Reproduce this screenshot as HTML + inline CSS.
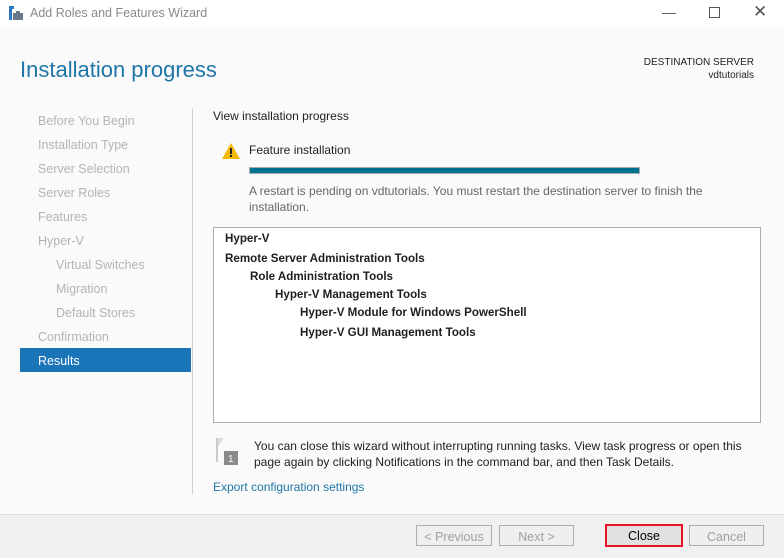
<!DOCTYPE html>
<html><head><style>
body{margin:0;width:784px;height:557px;overflow:hidden;font-family:"Segoe UI","Liberation Sans",sans-serif;font-size:12px;color:#1e1e1e;background:#fafafa;position:relative}
.a{position:absolute;white-space:nowrap}
.nav{color:#b4b4b4;font-size:12.5px}
.btn{position:absolute;top:525px;height:21px;border:1px solid #adadad;background:#efefef;color:#a0a0a0;text-align:center;line-height:22px;font-size:12.5px;box-sizing:border-box}
.b{font-weight:bold;font-size:11.6px}
</style></head><body>
<div class="a" style="left:0;top:0;width:784px;height:28px;background:#fff"></div>
<svg class="a" style="left:8px;top:5px" width="16" height="16"><rect x="1" y="1" width="5" height="3" fill="#2a7bc4"/><rect x="1" y="4" width="3" height="11" fill="#2a7bc4"/><rect x="5" y="8" width="10" height="7" fill="#6b7a8a"/><rect x="8" y="6" width="4" height="2" fill="#6b7a8a"/></svg>
<div class="a" style="left:30px;top:6px;color:#8a8a8a;font-size:12.5px">Add Roles and Features Wizard</div>
<div class="a" style="left:662px;top:4px;color:#555;font-size:14px">—</div>
<div class="a" style="left:709px;top:7px;width:9px;height:9px;border:1px solid #555"></div>
<div class="a" style="left:753px;top:2px;color:#555;font-size:17px">✕</div>
<div class="a" style="left:20px;top:57px;color:#1f76a8;font-size:22px;font-weight:300">Installation progress</div>
<div class="a" style="right:30px;top:56px;text-align:right;font-size:10px;line-height:13px">DESTINATION SERVER<br>vdtutorials</div>
<div class="a nav" style="left:38px;top:114px">Before You Begin</div>
<div class="a nav" style="left:38px;top:138px">Installation Type</div>
<div class="a nav" style="left:38px;top:162px">Server Selection</div>
<div class="a nav" style="left:38px;top:186px">Server Roles</div>
<div class="a nav" style="left:38px;top:210px">Features</div>
<div class="a nav" style="left:38px;top:234px">Hyper-V</div>
<div class="a nav" style="left:56px;top:258px">Virtual Switches</div>
<div class="a nav" style="left:56px;top:282px">Migration</div>
<div class="a nav" style="left:56px;top:306px">Default Stores</div>
<div class="a nav" style="left:38px;top:330px">Confirmation</div>
<div class="a" style="left:20px;top:348px;width:171px;height:24px;background:#1a74b8"></div>
<div class="a" style="left:38px;top:354px;color:#fff;font-size:12.5px">Results</div>
<div class="a" style="left:192px;top:108px;width:1px;height:386px;background:#d0d0d0"></div>
<div class="a" style="left:213px;top:109px">View installation progress</div>
<svg class="a" style="left:221px;top:142px" width="20" height="18"><path d="M10 1 L19 17 L1 17 Z" fill="#f5b800"/><rect x="9" y="6" width="2" height="6" fill="#222"/><rect x="9" y="13" width="2" height="2" fill="#222"/></svg>
<div class="a" style="left:249px;top:143px">Feature installation</div>
<div class="a" style="left:249px;top:167px;width:391px;height:7px;background:#00728f;border:1px solid #aaa;box-sizing:border-box"></div>
<div class="a" style="left:249px;top:183px;color:#666;line-height:16px">A restart is pending on vdtutorials. You must restart the destination server to finish the<br>installation.</div>
<div class="a" style="left:213px;top:227px;width:548px;height:196px;border:1px solid #abadb3;background:#fff;box-sizing:border-box"></div>
<div class="a b" style="left:225px;top:232px">Hyper-V</div>
<div class="a b" style="left:225px;top:252px">Remote Server Administration Tools</div>
<div class="a b" style="left:250px;top:270px">Role Administration Tools</div>
<div class="a b" style="left:275px;top:288px">Hyper-V Management Tools</div>
<div class="a b" style="left:300px;top:306px">Hyper-V Module for Windows PowerShell</div>
<div class="a b" style="left:300px;top:326px">Hyper-V GUI Management Tools</div>
<svg class="a" style="left:215px;top:438px" width="24" height="28"><rect x="1" y="0" width="2" height="24" fill="#ccc"/><path d="M3 0 L9 0 L3 8 Z" fill="#ddd"/><rect x="9" y="13" width="14" height="14" fill="#8a8a8a"/><text x="13" y="24" font-size="10" fill="#fff" font-family="Liberation Sans">1</text></svg>
<div class="a" style="left:254px;top:438px;line-height:16px">You can close this wizard without interrupting running tasks. View task progress or open this<br>page again by clicking Notifications in the command bar, and then Task Details.</div>
<div class="a" style="left:213px;top:480px;color:#1f76a8">Export configuration settings</div>
<div class="a" style="left:0;top:514px;width:784px;height:43px;background:#f0f0f0;border-top:1px solid #dcdcdc"></div>
<div class="btn" style="left:416px;width:76px">&lt; Previous</div>
<div class="btn" style="left:499px;width:75px">Next &gt;</div>
<div class="btn" style="left:605px;width:78px;height:23px;top:524px;border:2px solid #e81123;background:#e1e1e1;color:#000;line-height:21px">Close</div>
<div class="btn" style="left:689px;width:75px">Cancel</div>
</body></html>
